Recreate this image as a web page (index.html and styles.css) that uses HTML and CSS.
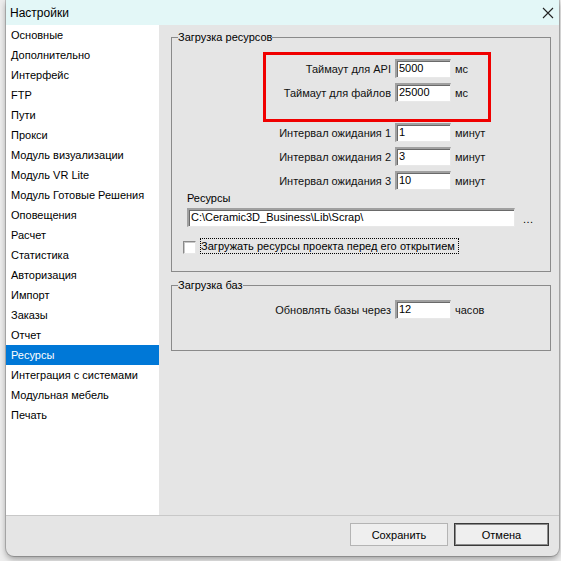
FILE: index.html
```html
<!DOCTYPE html>
<html lang="ru">
<head>
<meta charset="utf-8">
<title>Настройки</title>
<link rel="stylesheet" href="styles.css">
</head>
<body>
<div class="window">
  <div class="titlebar">
    <span class="title">Настройки</span>
    <span class="close">
      <svg width="12" height="12" viewBox="0 0 12 12"><path d="M1 1 L11 11 M11 1 L1 11" stroke="#222" stroke-width="1.1" fill="none"/></svg>
    </span>
  </div>
  <div class="main">
    <ul class="nav">
      <li>Основные</li>
      <li>Дополнительно</li>
      <li>Интерфейс</li>
      <li>FTP</li>
      <li>Пути</li>
      <li>Прокси</li>
      <li>Модуль визуализации</li>
      <li>Модуль VR Lite</li>
      <li>Модуль Готовые Решения</li>
      <li>Оповещения</li>
      <li>Расчет</li>
      <li>Статистика</li>
      <li>Авторизация</li>
      <li>Импорт</li>
      <li>Заказы</li>
      <li>Отчет</li>
      <li class="active">Ресурсы</li>
      <li>Интеграция с системами</li>
      <li>Модульная мебель</li>
      <li>Печать</li>
    </ul>
    <div class="pane">
      <fieldset class="group group-res">
        <legend>Загрузка ресурсов</legend>
        <div class="highlight"></div>
        <div class="row r-first"><span class="lbl">Таймаут для API</span><span class="field">5000</span><span class="unit">мс</span></div>
        <div class="row"><span class="lbl">Таймаут для файлов</span><span class="field">25000</span><span class="unit">мс</span></div>
        <div class="row r-int"><span class="lbl">Интервал ожидания 1</span><span class="field">1</span><span class="unit">минут</span></div>
        <div class="row"><span class="lbl">Интервал ожидания 2</span><span class="field">3</span><span class="unit">минут</span></div>
        <div class="row"><span class="lbl">Интервал ожидания 3</span><span class="field">10</span><span class="unit">минут</span></div>
        <div class="res-label">Ресурсы</div>
        <div class="path-row"><span class="field path">C:\Ceramic3D_Business\Lib\Scrap\</span><span class="dots">...</span></div>
        <div class="check-row"><span class="check"></span><span class="check-text">Загружать ресурсы проекта перед его открытием</span></div>
      </fieldset>
      <fieldset class="group group-db">
        <legend>Загрузка баз</legend>
        <div class="row r-db"><span class="lbl">Обновлять базы через</span><span class="field">12</span><span class="unit">часов</span></div>
      </fieldset>
    </div>
  </div>
  <div class="footer">
    <button class="btn btn-save">Сохранить</button>
    <button class="btn btn-cancel">Отмена</button>
  </div>
</div>
</body>
</html>
```
FILE: styles.css
```css
html, body {
  margin: 0;
  padding: 0;
}
body {
  width: 561px;
  height: 561px;
  overflow: hidden;
  background: #ededed;
  font-family: "Liberation Sans", Arial, sans-serif;
  font-size: 11px;
  color: #000;
}
.window {
  margin-left: 6px;
  width: 553px;
  height: 556px;
  background: #e5e5e5;
  border-radius: 0 0 8px 8px;
  box-shadow: 0 0 0 1px rgba(0,0,0,0.18), 0 3px 6px rgba(0,0,0,0.35);
  overflow: hidden;
  display: flex;
  flex-direction: column;
}
.titlebar {
  height: 25px;
  flex: none;
  background: #e3f7f7;
  display: flex;
  align-items: center;
  justify-content: space-between;
  padding: 0 0 0 4px;
}
.title {
  font-size: 12px;
  color: #000;
  margin-top: 1px;
}
.close {
  width: 22px;
  height: 25px;
  display: flex;
  align-items: center;
  justify-content: center;
}
.main {
  height: 490px;
  flex: none;
  display: flex;
}
.nav {
  list-style: none;
  margin: 0;
  padding: 0;
  width: 153px;
  flex: none;
  background: #fff;
}
.nav li {
  height: 20px;
  line-height: 20px;
  padding-left: 5px;
  white-space: nowrap;
}
.nav li.active {
  background: #0078d7;
  color: #fff;
}
.pane {
  flex: 1;
  padding: 6px 8px 0 12px;
}
.group {
  margin: 0;
  border: 1px solid #8a8a8a;
  padding: 0;
  min-width: 0;
  position: relative;
}
.group legend {
  padding: 0;
  margin-left: 6px;
  line-height: 13px;
  height: 13px;
}
.group-res {
  padding-bottom: 17px;
}
.group-db {
  margin-top: 7px;
  padding-bottom: 31px;
}
.highlight {
  position: absolute;
  left: 91px;
  top: 8px;
  width: 222px;
  height: 64px;
  border: 3px solid #f00000;
  pointer-events: none;
}
.row {
  display: flex;
  align-items: center;
  height: 19px;
  margin-top: 5px;
}
.r-first {
  margin-top: 15px;
}
.r-int {
  margin-top: 21px;
}
.r-db {
  margin-top: 8px;
}
.lbl {
  width: 219px;
  text-align: right;
  color: #111;
}
.field {
  box-sizing: border-box;
  width: 56px;
  height: 19px;
  margin-left: 4px;
  background: #fff;
  border-style: solid;
  border-width: 2px 1px 1px 2px;
  border-color: #a0a0a0 #e8e8e8 #e8e8e8 #a0a0a0;
  box-shadow: inset 1px 1px 0 #6a6a6a;
  padding: 0 0 0 2px;
  line-height: 15px;
  white-space: nowrap;
  overflow: hidden;
}
.unit {
  margin-left: 4px;
  color: #111;
}
.res-label {
  margin: 1px 0 0 15px;
  line-height: 14px;
  height: 14px;
}
.path-row {
  display: flex;
  align-items: center;
  margin-top: 3px;
  height: 19px;
}
.field.path {
  width: 328px;
  margin-left: 15px;
}
.dots {
  margin-left: 8px;
  margin-top: 3px;
  letter-spacing: 0.5px;
}
.check-row {
  display: flex;
  align-items: center;
  margin-top: 11px;
  height: 16px;
  padding-left: 11px;
}
.check {
  box-sizing: border-box;
  width: 13px;
  height: 13px;
  background: #fff;
  border-style: solid;
  border-width: 1px;
  border-color: #8a8a8a #e8e8e8 #e8e8e8 #8a8a8a;
  box-shadow: inset 1px 1px 0 #c8c8c8;
  margin-top: 2px;
}
.check-text {
  margin-left: 4px;
  border: 1px dotted #000;
  padding: 0 3px 0 0;
  line-height: 14px;
  letter-spacing: 0.05px;
}
.footer {
  flex: none;
  height: 40px;
  border-top: 1px solid #c8c8c8;
  display: flex;
  justify-content: flex-end;
  align-items: flex-start;
  padding: 7px 10px 0 0;
  gap: 6px;
}
.btn {
  font-family: "Liberation Sans", Arial, sans-serif;
  font-size: 11px;
  color: #000;
  height: 23px;
  padding: 0;
  background: #efefef;
  border: 1px solid #b4b4b4;
  border-radius: 0;
}
.btn-save {
  width: 98px;
}
.btn-cancel {
  width: 95px;
  border: 1px solid #3a3a3a;
  box-shadow: inset 0 0 0 1px #8c8c8c;
}
```
